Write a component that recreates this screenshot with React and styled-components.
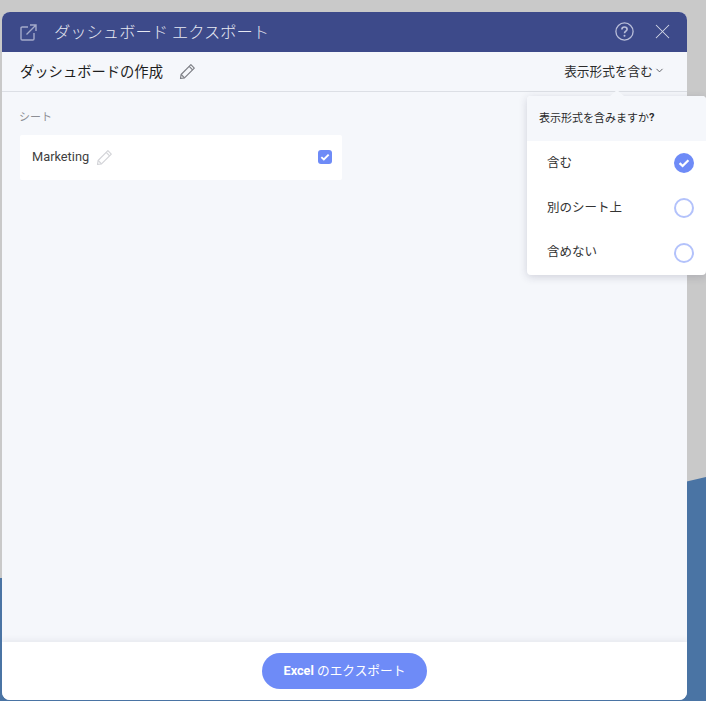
import styled, { createGlobalStyle } from 'styled-components';
import { ChevronDown, X } from 'lucide-react';

const font = `Roboto, "Noto Sans CJK JP", sans-serif`;

const GlobalStyle = createGlobalStyle`
  html, body {
    margin: 0;
    height: 100%;
    overflow: hidden;
  }
  body {
    background: #c9c9c9;
    font-family: ${font};
  }
`;

const Page = styled.div`
  position: relative;
  width: 706px;
  height: 701px;
  padding: 12px 19px 1px 2px;
  box-sizing: border-box;
  overflow: hidden;
`;
const Wave = styled.svg`
  position: absolute;
  top: 0;
  left: 0;
`;
const Modal = styled.div`
  position: relative;
  height: 100%;
  display: flex;
  flex-direction: column;
  border-radius: 8px;
  overflow: hidden;
  background: #f5f7fb;
`;
const Header = styled.header`
  height: 40px;
  flex: none;
  display: flex;
  align-items: center;
  padding: 0 12px 0 18px;
  background: #3d4a8a;
`;
const Title = styled.h1`
  margin: 0 0 0 17px;
  padding-bottom: 3px;
  flex: 1;
  font-size: 16.3px;
  font-weight: 300;
  color: #e6e8f2;
`;
const HeaderIcons = styled.div`
  display: flex;
  align-items: center;
  gap: 16px;
  padding-bottom: 1px;
`;
const SubBar = styled.div`
  height: 39px;
  flex: none;
  display: flex;
  align-items: center;
  padding: 0 22px 0 17px;
  border-bottom: 1px solid #dcdfe5;
`;
const DashName = styled.span`
  padding: 0 0 3px 1px;
  font-size: 14.3px;
  color: #1d1d1d;
`;
const EditIcon = styled.svg`
  margin-left: ${(p) => p.$gap}px;
  color: ${(p) => p.$color};
`;
const FormatSelect = styled.div`
  margin-left: auto;
  display: flex;
  align-items: center;
  gap: 1px;
  padding-bottom: 3px;
  font-size: 12.7px;
  color: #2b2b2b;
`;
const Content = styled.main`
  flex: 1;
  padding: 18px 18px 0 18px;
`;
const SectionLabel = styled.div`
  margin-left: -1px;
  font-size: 11px;
  line-height: 15px;
  color: #8d8f95;
`;
const SheetRow = styled.div`
  width: 322px;
  height: 45px;
  margin-top: 10px;
  display: flex;
  align-items: center;
  padding: 0 10px 0 12px;
  box-sizing: border-box;
  background: #fff;
  border-radius: 2px;
`;
const SheetName = styled.span`
  padding-bottom: 2px;
  font-size: 12.8px;
  color: #3f3f3f;
`;
const Checkbox = styled.span`
  margin: 0 0 1px auto;
  width: 14px;
  height: 14px;
  display: flex;
  align-items: center;
  justify-content: center;
  border-radius: 3px;
  background: #6e8bf7;
`;
const Footer = styled.footer`
  height: 58px;
  flex: none;
  display: flex;
  justify-content: center;
  padding-top: 11px;
  box-sizing: border-box;
  background: #fff;
  box-shadow: 0 -2px 6px rgba(40, 40, 70, 0.07);
`;
const ExportButton = styled.button`
  width: 165px;
  height: 36px;
  border: 0;
  border-radius: 18px;
  background: #6e8bf7;
  color: #fff;
  font-family: ${font};
  font-size: 12.7px;
  padding: 0 0 3px;
  b {
    font-weight: 700;
  }
`;
const Popover = styled.div`
  position: absolute;
  top: 96px;
  left: 527px;
  width: 179px;
  height: 179px;
  border-radius: 4px;
  background: #fff;
  box-shadow: 0 2px 8px rgba(40, 40, 70, 0.18);
  &::before {
    content: '';
    position: absolute;
    top: -6px;
    left: 83px;
    border-left: 7px solid transparent;
    border-right: 7px solid transparent;
    border-bottom: 6px solid #f5f7fb;
  }
`;
const PopoverTitle = styled.div`
  height: 45px;
  display: flex;
  align-items: center;
  padding: 0 0 3px 12px;
  box-sizing: border-box;
  background: #f5f7fb;
  border-radius: 4px 4px 0 0;
  font-size: 11px;
  color: #2b2b2b;
  b {
    font-weight: 700;
  }
`;
const Option = styled.div`
  height: 45px;
  display: flex;
  align-items: center;
  justify-content: space-between;
  padding: 0 12px 0 20px;
  box-sizing: border-box;
  font-size: 12.5px;
  color: #333;
`;
const OptionLabel = styled.span`
  padding-bottom: ${(p) => p.$lift}px;
`;
const Radio = styled.span`
  width: 20px;
  height: 20px;
  margin-bottom: 1px;
  display: flex;
  align-items: center;
  justify-content: center;
  box-sizing: border-box;
  border-radius: 50%;
  background: ${(p) => (p.$checked ? '#6e8bf7' : '#fff')};
  border: ${(p) => (p.$checked ? '0' : '2px solid #b3c2fb')};
`;

const Pencil = ({ size, gap, color }) => (
  <EditIcon $gap={gap} $color={color} width={size} height={size} viewBox="0 0 16 16" fill="none" stroke="currentColor" strokeWidth="1.1" strokeLinejoin="round">
    <path d="M11.2 1.6 14.4 4.8 5.2 14 1.4 14.6 2 10.8Z" />
    <path d="M9.6 3.2 12.8 6.4" />
    <path d="M2 10.8 5.2 14" />
  </EditIcon>
);

const Tick = ({ size }) => (
  <svg width={size} height={size} viewBox="0 0 12 12" fill="none" stroke="#fff" strokeWidth="2.3">
    <path d="M1.6 6.2 4.6 9 10.4 3.2" />
  </svg>
);

const ExportIcon = () => (
  <svg width="17" height="17" viewBox="0 0 17 17" fill="none" stroke="#a4aaca" strokeWidth="1.4">
    <path d="M8 3H2.2C1.5 3 1 3.5 1 4.2V14.8C1 15.5 1.5 16 2.2 16H12.8C13.5 16 14 15.5 14 14.8V9" />
    <path d="M6.5 10.5 16 1M10 1H16V7" />
  </svg>
);

const HelpIcon = () => (
  <svg width="19" height="19" viewBox="0 0 19 19" fill="none" stroke="#b9bed9" strokeWidth="1.3">
    <circle cx="9.5" cy="9.5" r="8.6" />
    <path d="M6.9 7.4C6.9 5.9 8 5 9.5 5S12.1 5.9 12.1 7.3C12.1 9.2 9.5 9.2 9.5 11.3" strokeWidth="1.6" />
    <circle cx="9.5" cy="13.8" r="1" fill="#b9bed9" stroke="none" />
  </svg>
);

const options = [
  { label: '含む', checked: true, lift: 4 },
  { label: '別のシート上', checked: false, lift: 5 },
  { label: '含めない', checked: false, lift: 6 },
];

const App = () => (
  <Page>
    <GlobalStyle />
    <Wave width="706" height="701" viewBox="0 0 706 701">
      <path d="M0 578C240 578 480 530 706 477V701H0Z" fill="#4a74a4" />
    </Wave>
    <Modal>
      <Header>
        <ExportIcon />
        <Title>ダッシュボード エクスポート</Title>
        <HeaderIcons>
          <HelpIcon />
          <X size={25} strokeWidth={1} color="#d5d8e8" />
        </HeaderIcons>
      </Header>
      <SubBar>
        <DashName>ダッシュボードの作成</DashName>
        <Pencil size={17} gap={16} color="#7d7f85" />
        <FormatSelect>
          表示形式を含む
          <ChevronDown size={11} strokeWidth={2} color="#55575d" />
        </FormatSelect>
      </SubBar>
      <Content>
        <SectionLabel>シート</SectionLabel>
        <SheetRow>
          <SheetName>Marketing</SheetName>
          <Pencil size={17} gap={7} color="#d3d4d8" />
          <Checkbox>
            <Tick size={10} />
          </Checkbox>
        </SheetRow>
      </Content>
      <Footer>
        <ExportButton>
          <b>Excel</b> のエクスポート
        </ExportButton>
      </Footer>
    </Modal>
    <Popover>
      <PopoverTitle>
        表示形式を含みますか<b>?</b>
      </PopoverTitle>
      {options.map((option) => (
        <Option key={option.label}>
          <OptionLabel $lift={option.lift}>{option.label}</OptionLabel>
          <Radio $checked={option.checked}>{option.checked && <Tick size={12} />}</Radio>
        </Option>
      ))}
    </Popover>
  </Page>
);

export default App;
